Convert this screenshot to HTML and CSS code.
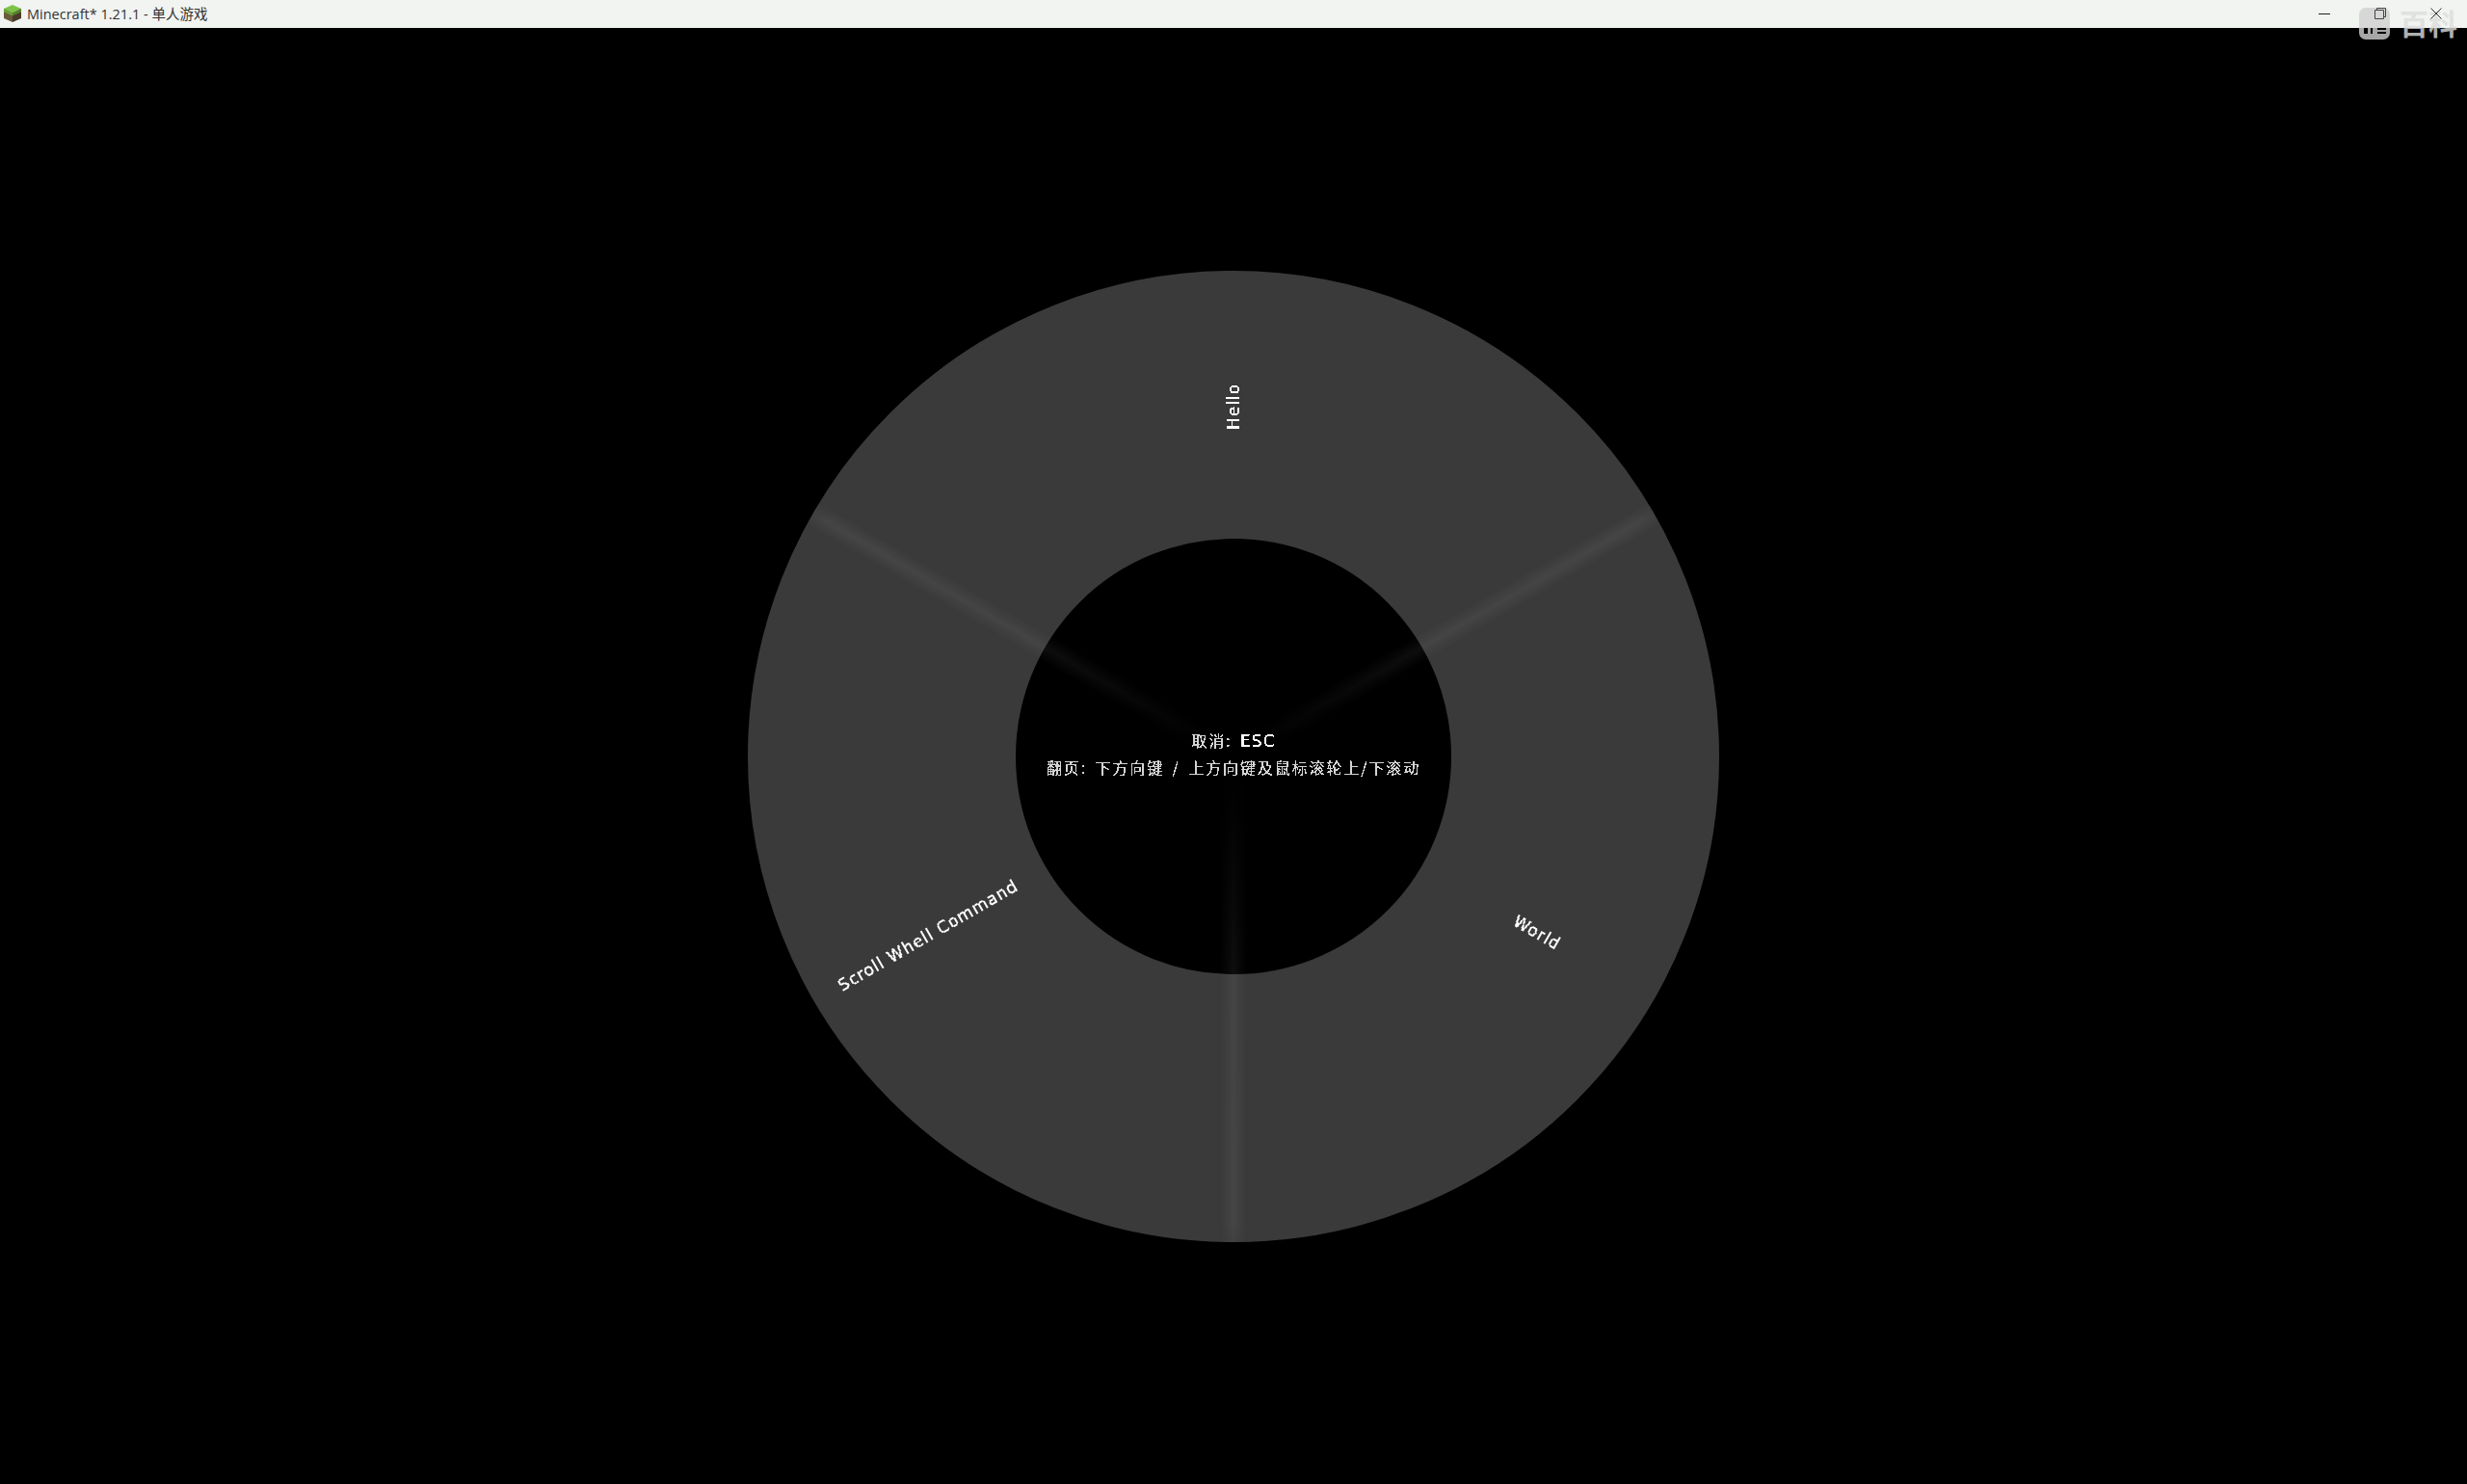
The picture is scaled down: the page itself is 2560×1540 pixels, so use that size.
FILE: index.html
```html
<!DOCTYPE html>
<html lang="zh-CN">
<head>
    <meta charset="UTF-8">
    <title>Minecraft* 1.21.1 - 单人游戏</title>
    <link rel="stylesheet" href="styles.css">
</head>
<body>
    <!-- threshold on the alpha channel, gives the text its blocky game look -->
    <svg class="defs" width="0" height="0">
        <filter id="pixel" x="0" y="0" width="100%" height="100%">
            <feComponentTransfer>
                <feFuncA type="discrete" tableValues="0 1 1"/>
            </feComponentTransfer>
        </filter>
    </svg>

    <header class="titlebar">
        <div class="title">
            <svg class="app-icon" viewBox="0 0 20 20">
                <polygon points="10,1 19,5 10,9.5 1,5" fill="#7fc24a"/>
                <polygon points="1,5 10,9.5 10,19 1,15" fill="#6b5a3c"/>
                <polygon points="19,5 10,9.5 10,19 19,15" fill="#4a3a28"/>
                <polygon points="1,5 10,9.5 10,12.5 1,8.5" fill="#6aa035"/>
                <polygon points="19,5 10,9.5 10,12.5 19,8.5" fill="#55802f"/>
            </svg>
            <span>Minecraft* 1.21.1 - 单人游戏</span>
        </div>
        <div class="watermark">
            <svg class="wm-icon" viewBox="0 0 32 33">
                <rect x="0" y="0" width="32" height="33" rx="7" fill="#d0d0d0"/>
                <rect x="5" y="21" width="4" height="6" fill="#000"/>
                <rect x="12" y="21" width="2" height="6" fill="#000"/>
                <rect x="19" y="21" width="9" height="2" fill="#000"/>
                <rect x="19" y="25" width="9" height="2" fill="#000"/>
            </svg>
            <span class="wm-text">百科</span>
        </div>
        <div class="controls">
            <svg class="ctl" viewBox="0 0 12 12"><path d="M0 6.5H12" stroke="#222" fill="none"/></svg>
            <svg class="ctl" viewBox="0 0 12 12"><path d="M0.5 2.5H9.5V11.5H0.5ZM2.5 2.5V0.5H11.5V9.5H9.5" stroke="#444" fill="none"/></svg>
            <svg class="ctl" viewBox="0 0 12 12"><path d="M0.5 0.5L11.5 11.5M11.5 0.5L0.5 11.5" stroke="#333" fill="none"/></svg>
        </div>
    </header>

    <main class="stage">
        <div class="wheel">
            <svg class="wheel-art" viewBox="-504 -504 1008 1008">
                <defs>
                    <linearGradient id="spokeFill">
                        <stop offset="0" stop-color="#fff" stop-opacity="0"/>
                        <stop offset="0.5" stop-color="#fff" stop-opacity="0.06"/>
                        <stop offset="1" stop-color="#fff" stop-opacity="0"/>
                    </linearGradient>
                    <radialGradient id="spokeFade" gradientUnits="userSpaceOnUse" cx="0" cy="0" r="504">
                        <stop offset="0.03" stop-color="#000"/>
                        <stop offset="0.44" stop-color="#fff" stop-opacity="0.9"/>
                        <stop offset="0.96" stop-color="#fff"/>
                        <stop offset="1" stop-color="#fff" stop-opacity="0.6"/>
                    </radialGradient>
                    <mask id="spokeMask" maskUnits="userSpaceOnUse" x="-504" y="-504" width="1008" height="1008">
                        <rect x="-504" y="-504" width="1008" height="1008" fill="url(#spokeFade)"/>
                    </mask>
                </defs>
                <circle class="ring" r="365" />
                <g mask="url(#spokeMask)">
                    <rect class="spoke" x="-14" y="0" width="28" height="504"/>
                    <rect class="spoke" x="-14" y="0" width="28" height="504" transform="rotate(120)"/>
                    <rect class="spoke" x="-14" y="0" width="28" height="504" transform="rotate(240)"/>
                </g>
                <text class="label" transform="translate(0 -363) rotate(-90)">Hello</text>
                <text class="label" transform="translate(315 183) rotate(30)">World</text>
                <text class="label" transform="translate(-317 186) rotate(-30)">Scroll Whell Command</text>
            </svg>
            <div class="hint">
                <p class="hint-line">取消: <b class="key">ESC</b></p>
                <p class="hint-line">翻页: 下方向键 / 上方向键及鼠标滚轮上/下滚动</p>
            </div>
        </div>
    </main>
</body>
</html>
```

FILE: styles.css
```css
* {
    margin: 0;
    padding: 0;
    box-sizing: border-box;
}

html, body {
    height: 100%;
}

body {
    display: flex;
    flex-direction: column;
    background-color: #000;
    overflow: hidden;
}

.defs {
    position: absolute;
}

.titlebar {
    position: relative;
    display: flex;
    align-items: center;
    justify-content: space-between;
    height: 29px;
    flex: none;
    padding-left: 3px;
    padding-bottom: 2px;
    background-color: #f1f4f1;
}

.title {
    display: flex;
    align-items: center;
    gap: 5px;
    font-family: "Open Sans", "Noto Sans CJK SC", sans-serif;
    font-size: 14.5px;
    color: #333;
}

.app-icon {
    width: 20px;
    height: 20px;
}

.controls {
    position: relative;
    display: flex;
    gap: 46px;
    padding-right: 26px;
}

.ctl {
    width: 12px;
    height: 12px;
}

/* site watermark sitting across the window corner */
.watermark {
    position: absolute;
    top: 8px;
    left: 2448px;
    display: flex;
    align-items: flex-start;
    gap: 10px;
    opacity: 0.8;
}

.wm-icon {
    width: 32px;
    height: 33px;
}

.wm-text {
    font-family: "Noto Sans CJK SC", sans-serif;
    font-weight: bold;
    font-size: 30px;
    line-height: 30px;
    color: #ddd;
}

.stage {
    flex: 1;
    display: flex;
    align-items: center;
    justify-content: center;
}

.wheel {
    position: relative;
    width: 1008px;
    height: 1008px;
}

.wheel-art {
    display: block;
    width: 100%;
    height: 100%;
}

.ring {
    fill: none;
    stroke: #3a3a3a;
    stroke-width: 278px;
}

.spoke {
    fill: url(#spokeFill);
}

.label {
    font-family: "DejaVu Sans", sans-serif;
    font-size: 17px;
    fill: #fff;
    text-anchor: middle;
    dominant-baseline: central;
    letter-spacing: 1px;
    filter: url(#pixel);
}

.hint {
    position: absolute;
    top: 474px;
    left: 0;
    right: 0;
    text-align: center;
    font-family: "Noto Sans CJK SC", sans-serif;
    font-size: 16px;
    line-height: 27px;
    letter-spacing: 1.9px;
    word-spacing: 3px;
    color: #d4d4d4;
    filter: url(#pixel);
}

.key {
    font-family: "DejaVu Sans", sans-serif;
    font-weight: normal;
    font-size: 17px;
    letter-spacing: 1px;
    color: #fff;
}
```
